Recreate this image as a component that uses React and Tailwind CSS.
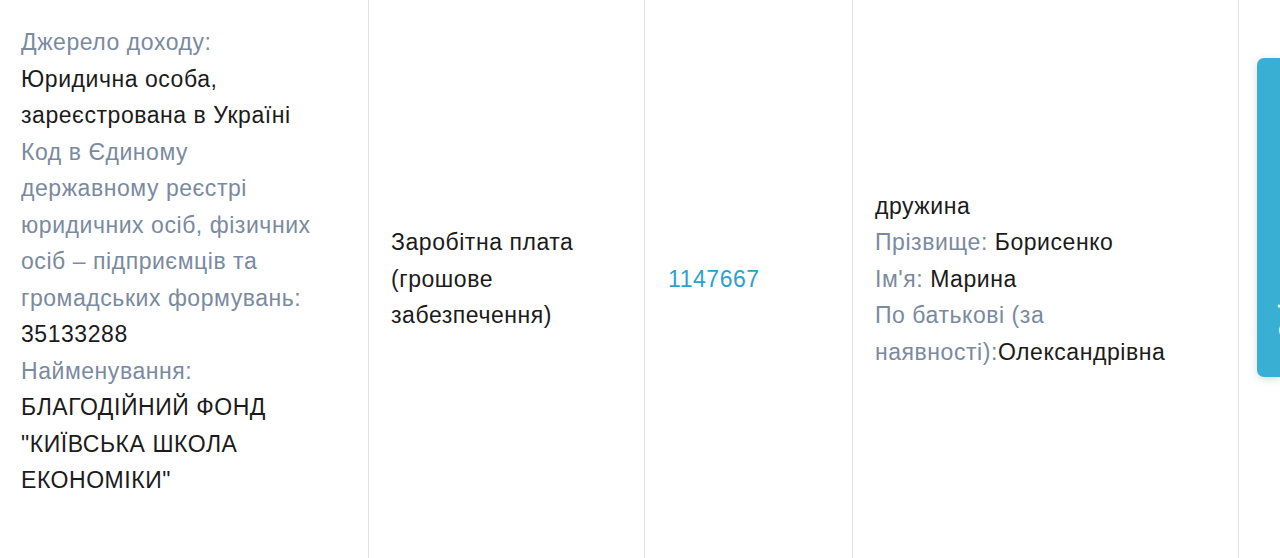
const label = 'text-[#7a8aa0]'

function Label({ children }) {
  return <span className={label}>{children}</span>
}

export default function App() {
  return (
    <div className="relative flex h-[558px] w-[1280px] overflow-hidden bg-white font-['Liberation_Sans',Arial,sans-serif] text-[23px] leading-[36.5px] tracking-[0.55px] text-[#1b1b1b]">
      <div className="flex w-[369px] shrink-0 items-start border-r border-[#e2e2e2] pl-[21px] pr-[10px] pt-[24px]">
        <div>
          <div className={label}>Джерело доходу:</div>
          <div>
            Юридична особа,
            <br />
            зареєстрована в Україні
          </div>
          <div className={label}>
            Код в Єдиному
            <br />
            державному реєстрі
            <br />
            юридичних осіб, фізичних
            <br />
            осіб – підприємців та
            <br />
            громадських формувань:
          </div>
          <div>35133288</div>
          <div className={label}>Найменування:</div>
          <div>
            БЛАГОДІЙНИЙ ФОНД
            <br />
            "КИЇВСЬКА ШКОЛА
            <br />
            ЕКОНОМІКИ"
          </div>
        </div>
      </div>

      <div className="flex w-[276px] shrink-0 items-center border-r border-[#e2e2e2] pl-[22px]">
        <div>
          Заробітна плата
          <br />
          (грошове
          <br />
          забезпечення)
        </div>
      </div>

      <div className="flex w-[208px] shrink-0 items-center border-r border-[#e2e2e2] pl-[23px]">
        <a className="text-[#2e9fcf]">1147667</a>
      </div>

      <div className="flex w-[386px] shrink-0 items-center border-r border-[#e2e2e2] pl-[22px]">
        <div>
          <div>дружина</div>
          <div>
            <Label>Прізвище:</Label> Борисенко
          </div>
          <div>
            <Label>Ім'я:</Label> Марина
          </div>
          <div>
            <Label>
              По батькові (за
              <br />
              наявності):
            </Label>
            Олександрівна
          </div>
        </div>
      </div>

      <div className="flex-1" />

      <div className="absolute left-[1257px] top-[58px] flex h-[319px] w-[23px] items-center overflow-hidden rounded-l-[7px] bg-[#3aafd4] pt-[170px] shadow-[0_2px_8px_rgba(0,0,0,0.15)]">
        <span className="ml-[19px] block rotate-180 whitespace-nowrap text-[20px] font-bold leading-none text-white [writing-mode:vertical-rl]">
          Оцінка
        </span>
      </div>
    </div>
  )
}
